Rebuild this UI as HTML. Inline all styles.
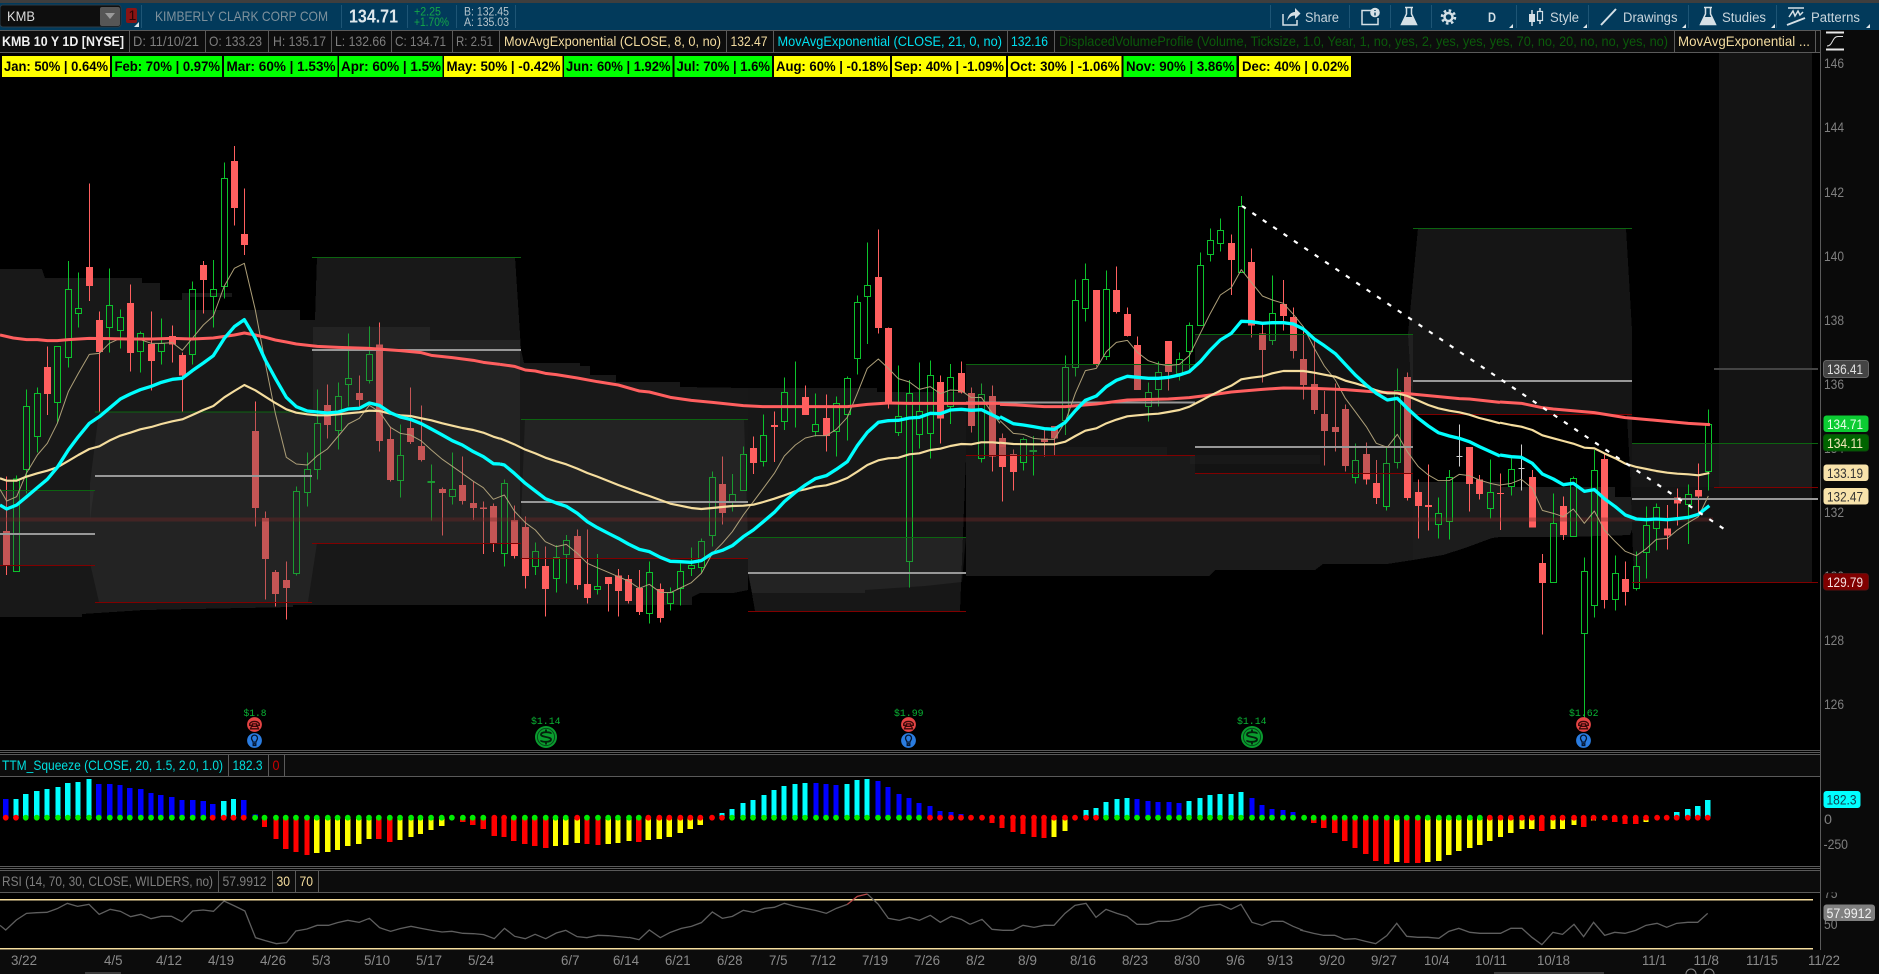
<!DOCTYPE html>
<html><head><meta charset="utf-8"><title>KMB chart</title>
<style>html,body{margin:0;padding:0;background:#000}svg{display:block}
text{font-family:"Liberation Sans",sans-serif;white-space:pre}
.s{stroke:#5a5a5a;stroke-width:1;fill:none}.h{stroke:#1e5575;stroke-width:1}
.ic{fill:none;stroke:#d5e0e6;stroke-width:1.5}.if{fill:#d5e0e6}
.hd{font-size:13.5px;fill:#c9d5dc}.r2{font-size:14px;fill:#7e7e7e}.mo{font-size:14px;font-weight:bold;fill:#000}
.ax{font-size:14px;fill:#7f7f7f}.dt{font-size:14px;fill:#8a8a8a}.pl{font-size:14px}
.eps{font-family:"Liberation Mono",monospace;font-size:10.5px;fill:#0ab234}
</style></head><body>
<svg xmlns="http://www.w3.org/2000/svg" width="1879" height="974" viewBox="0 0 1879 974">
<rect width="1879" height="974" fill="#000"/>
<!-- dark profiles -->
<g shape-rendering="crispEdges">
<polygon fill="#181818" points="0,269 42,269 45,278 142,278 142,283 160,283 160,300 182,300 182,293 232,293 232,297 190,297 190,310 300,310 300,320 315,320 317,257 515,257 521,350 524,363 580,363 580,366 590,366 590,375 616,375 616,382 680,382 680,387 748,388 748,590 733,593 700,593 692,597 692,605 293,605 293,607 144,610 82,614 82,617 0,617"/>
<polygon fill="#171717" points="748,388 877,388 877,392 966,392 966,456 960,611 755,611 748,570"/>
<polygon fill="#1a1a1a" points="966,456 1195,456 1195,474 1413,474 1413,560 1387,564 1323,564 1315,570 1215,570 1209,576 966,576"/>
<polygon fill="#151515" points="1418,228 1626,228 1632,330 1632,414 1413,414 1408,334"/>
<polygon fill="#1c1c1c" points="1413,482 1500,482 1500,487 1615,487 1615,497 1640,497 1640,507 1630,535 1570,537 1500,537 1492,538 1465,548 1443,555 1413,560"/>
<polygon fill="#141414" points="1627,415 1632,415 1632,443 1719,443 1719,582 1634,582 1630,470"/>
<rect x="1719" y="53" width="93" height="529" fill="#141414"/>
<rect x="1632" y="443" width="87" height="44" fill="#171717"/>
<rect x="1719" y="443" width="93" height="44" fill="#1c1c1c"/>
</g>
<!-- candles -->
<g transform="translate(0 130) scale(.33333)" fill="none" shape-rendering="crispEdges">
<path stroke="#ff5f5f" stroke-width="3" d="M19 1040V1335M142 650V855M268 160V513M298 545V845M391 463V725M454 544V782M517 586V698M547 668V845M610 393V551M703 48V287M733 175V375M766 814V1190M796 1144V1409M826 1320V1430M859 1294V1468M982 763V926M1078 736V830M1138 577V965M1171 890V1055M1231 772V942M1264 826V995M1327 1072V1217M1387 979V1124M1420 1054V1170M1450 1114V1272M1480 1120V1266"/>
<path stroke="#ff5f5f" stroke-width="21" d="M19 1203V1305M142 711V792M268 411V468M298 570V666M391 519V669M454 642V693M517 618V644M547 675V736M610 405V450M703 93V234M733 312V345M766 903V1134M796 1164V1287M826 1326V1392M859 1350V1374M982 825V885M1078 789V810M1138 643V933M1171 927V1050M1231 894V936M1264 948V990M1327 1077V1089M1387 1065V1113M1420 1119V1134M1450 1132V1137M1480 1128V1240"/>
<path stroke="#0cc22c" stroke-width="3" d="M49 1037V1047M40 1047h18V1325h-18zM79 778V829M79 1018V1090M70 829h18V1018h-18zM112 772V790M112 920V968M103 790h18V920h-18zM172 818V880M163 649h18V818h-18zM205 393V478M205 683V713M196 478h18V683h-18zM235 427V535M235 551V593M226 535h18V551h-18zM328 415V526M328 593V668M319 526h18V593h-18zM361 538V562M361 602V656M352 562h18V602h-18zM421 604V610M421 665V728M412 610h18V665h-18zM484 565V641M484 665V704M475 641h18V665h-18zM577 455V478M577 674V704M568 478h18V674h-18zM640 390V478M640 500V593M631 478h18V500h-18zM673 97V145M673 470V506M664 145h18V470h-18zM889 1069V1084M889 1331V1336M880 1084h18V1331h-18zM922 968V1018M922 1088V1130M913 1018h18V1088h-18zM952 778V880M952 1019V1048M943 880h18V1019h-18zM1015 757V799M1015 902V958M1006 799h18V902h-18zM1045 610V745M1045 764V830M1036 745h18V764h-18zM1108 589V673M1108 752V760M1099 673h18V752h-18zM1201 883V976M1201 1052V1102M1192 976h18V1052h-18zM1294 1004V1172M1284 1054h20V1058h-20zM1357 967V1078M1357 1100V1124M1348 1078h18V1100h-18z"/>
</g>
<g transform="translate(500 200) scale(.33333)" fill="none" shape-rendering="crispEdges">
<path stroke="#ff5f5f" stroke-width="3" d="M43 916V1075M76 950V1165M136 1040V1250M232 988V1168M262 988V1210M325 1131V1235M355 1107V1250M385 1125V1210M418 1110V1245M481 1150V1268M667 769V974M760 709V822M823 634V786M916 556V645M979 583V755M1135 88V400M1165 382V625M1321 527V730M1384 484V580M1414 562V698M1477 556V815"/>
<path stroke="#ff5f5f" stroke-width="21" d="M43 960V1068M76 981V1128M136 1098V1167M232 1008V1155M262 1152V1194M325 1131V1152M355 1127V1173M385 1137V1203M418 1164V1236M481 1167V1254M667 852V939M760 744V789M823 675V681M916 591V645M979 654V708M1135 231V384M1165 384V610M1321 546V656M1384 519V578M1414 579V678M1477 588V770"/>
<path stroke="#0cc22c" stroke-width="3" d="M13 838V850M13 1060V1100M4 850h18V1060h-18zM106 1027V1054M106 1100V1125M97 1054h18V1100h-18zM169 1035V1072M169 1136V1178M160 1072h18V1136h-18zM199 1005V1021M199 1064V1150M190 1021h18V1064h-18zM292 1062V1159M292 1168V1184M283 1159h18V1168h-18zM448 1084V1117M448 1241V1270M439 1117h18V1241h-18zM511 1162V1177M511 1211V1232M502 1177h18V1211h-18zM541 1090V1114M541 1166V1217M532 1114h18V1166h-18zM574 1042V1096M574 1105V1128M565 1096h18V1105h-18zM604 1015V1024M604 1103V1120M595 1024h18V1103h-18zM637 814V832M637 1007V1040M628 832h18V1007h-18zM697 822V883M697 907V934M688 883h18V907h-18zM730 739V763M721 763h18V872h-18zM790 643V706M790 785V800M781 706h18V785h-18zM853 532V577M853 665V690M844 577h18V665h-18zM886 484V683M946 580V673M946 695V710M937 673h18V695h-18zM1009 590V610M1009 695V770M1000 610h18V695h-18zM1042 530V535M1042 644V722M1033 535h18V644h-18zM1072 287V307M1072 476V523M1063 307h18V476h-18zM1102 127V256M1102 290V432M1093 256h18V290h-18zM1195 496V649M1195 698V708M1186 649h18V698h-18zM1228 540V580M1228 1085V1162M1219 580h18V1085h-18zM1258 488V634M1258 704V745M1249 634h18V704h-18zM1291 481V526M1291 701V776M1282 526h18V701h-18zM1351 492V532M1351 620V672M1342 532h18V620h-18zM1444 550V583M1444 776V788M1435 583h18V776h-18z"/>
</g>
<g transform="translate(1000 180) scale(.33333)" fill="none" shape-rendering="crispEdges">
<path stroke="#ff5f5f" stroke-width="3" d="M7 760V965M40 808V932M133 745V830M163 740V826M289 330V560M349 259V400M382 382V470M412 469V630M505 483V632M694 163V345M754 205V473M787 435V608M850 300V452M880 382V536M910 440V658M943 480V702M973 633V857M1006 610V815M1036 673V875M1099 787V914M1129 840V972M1222 577V962M1255 898V1076M1285 853V1052M1408 801V995M1438 885V958"/>
<path stroke="#ff5f5f" stroke-width="21" d="M7 774V861M40 822V876M133 776V786M163 738V776M289 330V553M349 330V396M382 402V468M412 495V630M505 483V576M694 189V240M754 246V437M787 460V510M850 372V408M880 411V513M910 537V615M943 612V690M973 702V753M1006 741V756M1036 687V858M1099 822V899M1129 909V954M1222 591V954M1255 936V978M1285 975V981M1408 801V912M1438 898V942"/>
<path stroke="#0cc22c" stroke-width="3" d="M70 772V778M70 848V872M61 778h18V848h-18zM100 768V887M90 811h20V815h-20zM196 526V562M196 722V765M187 562h18V722h-18zM226 298V361M226 563V590M217 361h18V563h-18zM256 250V298M256 386V425M247 298h18V386h-18zM319 271V328M319 530V540M310 328h18V530h-18zM445 608V637M445 680V725M436 637h18V680h-18zM475 545V577M475 629V680M466 577h18V629h-18zM538 517V538M538 580V602M529 538h18V580h-18zM568 428V436M568 515V570M559 436h18V515h-18zM601 218V256M592 256h18V437h-18zM631 145V181M631 224V245M622 181h18V224h-18zM661 115V151M661 191V215M652 151h18V191h-18zM724 48V79M715 79h18V277h-18zM817 286V400M817 482V495M808 400h18V482h-18zM1066 790V841M1066 893V910M1057 841h18V893h-18zM1159 800V850M1159 979V992M1150 850h18V979h-18zM1192 565V631M1192 848V865M1183 631h18V848h-18zM1315 952V1000M1315 1034V1076M1306 1000h18V1034h-18zM1348 870V892M1348 1025V1079M1339 892h18V1025h-18zM1471 838V937M1471 986V1016M1462 937h18V986h-18z"/>
<path stroke="#cfcfcf" stroke-width="3" d="M1378 733V860M1369 829h18"/>
</g>
<g transform="translate(1500 340) scale(.33333)" fill="none" shape-rendering="crispEdges">
<path stroke="#ff5f5f" stroke-width="3" d="M1 400V570M97 390V562M127 642V884M190 470V600M313 340V805M376 664V797M502 495V628M532 445V556M595 370V520"/>
<path stroke="#ff5f5f" stroke-width="21" d="M1 459V462M97 411V562M127 669V729M190 498V585M313 357V780M376 717V756M502 565V587M532 473V491M595 450V470"/>
<path stroke="#0cc22c" stroke-width="3" d="M34 355V388M34 440V467M25 388h18V440h-18zM160 460V550M151 550h18V728h-18zM220 410V415M211 415h18V590h-18zM253 652V694M253 880V1149M244 694h18V880h-18zM283 330V391M283 796V832M274 391h18V796h-18zM346 646V700M346 778V812M337 700h18V778h-18zM409 635V679M409 746V752M400 679h18V746h-18zM439 500V556M439 637V716M430 556h18V637h-18zM469 490V502M469 566V632M460 502h18V566h-18zM565 433V463M565 494V612M556 463h18V494h-18zM625 208V253M625 395V452M616 253h18V395h-18z"/>
<path stroke="#cfcfcf" stroke-width="3" d="M64 313V452M55 385h18"/>
</g>
<!-- value area overlays -->
<g fill="#3e3e3e" fill-opacity=".3">
<polygon points="0,490 94,490 90,520 90,565 0,565"/>
<polygon points="99,412 313,412 313,327 430,327 430,340 520,340 520,543 317,543 308,602 99,602 90,563 90,483"/>
<polygon points="525,419 744,419 748,540 748,558.7 520,558.7 520,545"/>
<polygon points="748,537 966,537 962,582 925,586 865,590 865,593 752,593 748,575"/>
<polygon points="966,364 1195,364 1195,456 966,456"/>
<polygon points="1195,334 1413,334 1413,474 1195,474"/>
<rect fill-opacity=".14" x="1000" y="447" width="167" height="9"/>
<rect fill-opacity=".12" x="1190" y="455" width="130" height="9"/>
</g>
<!-- horizontal lines -->
<rect x="0" y="517.5" width="1713" height="4" fill="#7a2828" fill-opacity=".38"/>
<g shape-rendering="crispEdges">
<path fill="none" stroke="#0c6410" stroke-width="1" d="M0 490.5H95M95 412H312M312 257.500H521M521 419.500H748M748 537.500H966M966 364.500H1195M1195 334.500H1413M1413 228.500H1632M1632 443.500H1818"/>
<path fill="none" stroke="#800000" stroke-width="1" d="M0 565.500H95M95 602.500H312M312 543.500H521M521 558.500H748M748 611.500H966M966 455.500H1195M1195 473.500H1413M1413 414.500H1632M1632 582.500H1818M1714 487.500H1818"/>
<path fill="none" stroke="#989898" stroke-width="2" d="M0 534H95M95 476H312M312 350H521M521 502H748M748 573H966M966 402.500H1195M1195 447H1413M1413 381H1632M1632 499H1818"/>
<path fill="none" stroke="#444" stroke-width="2" d="M1714 369H1818"/>
</g>
<!-- moving averages -->
<g fill="none" stroke-linejoin="round">
<g transform="translate(0 130) scale(.33333)">
<path stroke="#ad9f78" stroke-width="3" d="M0 1078L20 1113L50 1100L79 1030L112 975L142 940L172 880L205 785L235 730L268 673L298 670L328 640L361 625L391 628L421 629L454 640L484 640L517 638L547 661L577 625L610 585L640 558L673 468L703 415L733 400L766 540L796 700L826 850L859 982L889 1002L922 1005L952 977L982 957L1015 918L1045 882L1078 865L1108 826L1138 845L1171 892L1201 910L1231 915L1264 933L1294 960L1327 988L1357 1009L1387 1030L1420 1054L1450 1073L1480 1108L1500 1100"/>
<path stroke="#ff5f5f" stroke-width="9" d="M0 615L40 624L80 629L112 629L142 632L172 632L205 629L268 625L328 626L391 627L454 627L517 625L577 627L640 624L703 615L733 609L766 615L796 622L826 630L859 636L889 642L952 649L1015 652L1108 655L1201 662L1264 668L1294 676L1357 683L1420 691L1450 697L1500 703"/>
<path stroke="#f5dd9e" stroke-width="6.500" d="M0 1045L20 1052L50 1052L79 1040L112 1030L142 1022L172 1012L205 993L235 975L268 957L298 949L328 932L361 917L391 908L421 898L454 891L484 882L517 874L547 868L577 855L610 840L640 828L673 802L703 783L733 765L766 781L796 800L826 819L859 838L889 848L922 853L952 856L982 856L1015 853L1045 850L1078 847L1108 842L1138 843L1171 851L1201 856L1231 858L1264 865L1294 871L1327 880L1357 887L1387 894L1420 900L1450 908L1480 920L1500 926"/>
<path stroke="#00ffff" stroke-width="10" d="M0 1125L20 1137L50 1125L80 1100L112 1073L142 1048L172 1012L205 960L235 920L268 880L298 860L328 835L361 807L391 792L421 779L454 769L484 757L517 748L547 745L577 722L610 699L640 677L673 625L703 590L733 569L766 625L796 690L826 745L859 802L889 830L922 843L952 846L982 849L1015 846L1045 837L1078 835L1108 819L1138 826L1171 848L1201 861L1231 868L1264 881L1294 897L1327 915L1357 932L1387 945L1420 965L1450 980L1480 1001L1500 1002"/>
</g>
<g transform="translate(500 200) scale(.33333)">
<path stroke="#ad9f78" stroke-width="3" d="M0 890L13 885L43 933L76 968L106 990L136 1025L169 1040L199 1033L232 1060L262 1090L292 1103L325 1117L355 1130L385 1143L418 1165L448 1153L481 1177L511 1178L541 1164L574 1148L604 1120L637 1060L667 1030L697 995L730 945L760 905L790 865L823 820L853 768L886 735L916 714L946 707L979 707L1009 688L1042 652L1072 580L1102 505L1135 477L1165 505L1195 536L1228 546L1258 568L1291 560L1321 581L1351 570L1384 572L1414 593L1444 592L1477 640L1500 670"/>
<path stroke="#ff5f5f" stroke-width="9" d="M0 493L43 499L76 510L106 513L136 520L169 524L232 534L292 545L355 555L418 573L448 576L511 592L574 601L637 607L730 617L790 620L853 620L916 620L1042 620L1102 613L1165 609L1228 610L1321 610L1500 610"/>
<path stroke="#f5dd9e" stroke-width="6.500" d="M0 715L43 733L76 749L106 760L136 773L169 784L199 793L232 806L262 819L292 830L325 843L355 855L385 866L418 878L448 888L481 900L511 911L541 917L574 924L604 927L637 924L667 921L697 918L730 917L760 914L790 906L823 896L853 886L886 874L916 868L946 860L979 856L1009 847L1042 834L1072 815L1102 795L1135 781L1165 775L1195 773L1228 763L1258 760L1291 750L1321 746L1351 738L1384 732L1414 733L1444 727L1477 727L1500 729"/>
<path stroke="#00ffff" stroke-width="10" d="M0 792L13 795L43 820L76 850L106 873L136 896L169 909L199 919L232 940L262 965L292 983L325 1000L355 1015L385 1032L418 1048L448 1055L481 1072L511 1084L541 1085L574 1087L604 1082L637 1060L667 1051L697 1037L730 1010L760 990L790 965L823 937L853 905L886 877L916 855L946 836L979 827L1009 808L1042 785L1072 737L1102 697L1135 667L1165 662L1195 661L1228 654L1258 652L1291 640L1321 641L1351 630L1384 628L1414 631L1444 629L1477 645L1500 656"/>
</g>
<g transform="translate(1000 180) scale(.33333)">
<path stroke="#ad9f78" stroke-width="3" d="M0 722L40 760L70 763L100 775L133 778L163 778L196 725L226 640L256 572L289 565L319 515L349 487L382 481L412 517L445 542L475 552L505 557L538 553L568 527L601 460L631 400L661 345L694 323L724 269L754 307L787 348L817 360L850 370L880 403L910 440L943 505L973 558L1006 600L1036 655L1066 695L1099 740L1129 790L1162 802L1192 763L1222 815L1255 860L1285 885L1315 902L1348 902L1378 883L1408 887L1438 900L1471 910L1500 916"/>
<path stroke="#ff5f5f" stroke-width="9" d="M0 673L70 676L133 680L196 680L289 672L382 660L505 657L568 653L631 645L694 636L787 628L850 624L943 625L1036 629L1129 636L1222 641L1285 647L1378 656L1408 657L1500 667"/>
<path stroke="#f5dd9e" stroke-width="6.500" d="M0 788L40 792L100 793L163 793L196 785L226 768L256 752L289 745L319 730L349 719L382 709L412 706L445 703L475 701L505 696L538 690L568 680L601 663L631 647L661 632L694 617L724 598L754 593L787 589L817 580L850 573L880 573L910 573L943 578L973 584L1006 590L1036 602L1066 610L1099 620L1129 631L1162 640L1192 640L1222 648L1255 662L1285 675L1315 685L1348 692L1378 697L1408 704L1438 714L1471 722L1500 730"/>
<path stroke="#00ffff" stroke-width="10" d="M0 710L40 731L70 735L100 740L133 746L163 748L196 727L226 692L256 661L289 648L319 620L349 601L382 589L412 592L445 595L475 595L505 592L538 585L568 575L601 545L631 510L661 480L694 460L724 424L754 425L787 430L817 428L850 428L880 432L910 447L943 477L973 497L1006 521L1036 553L1066 585L1099 615L1129 640L1162 660L1192 655L1222 685L1255 715L1285 738L1315 758L1348 768L1378 775L1408 785L1438 800L1471 815L1500 828"/>
</g>
<g transform="translate(1500 340) scale(.33333)">
<path stroke="#ad9f78" stroke-width="3" d="M0 435L34 430L64 418L97 445L127 511L160 520L190 530L220 507L253 550L283 513L313 570L346 605L376 634L409 647L439 626L469 598L502 595L532 570L565 548L595 530L625 468"/>
<path stroke="#ff5f5f" stroke-width="9" d="M0 186L64 190L127 203L160 207L283 218L376 233L469 241L565 250L630 254"/>
<path stroke="#f5dd9e" stroke-width="6.500" d="M0 248L34 255L64 260L97 270L127 286L160 295L190 303L220 311L253 323L283 325L313 340L346 355L376 371L409 381L439 387L469 393L502 398L532 401L565 403L595 406L628 399"/>
<path stroke="#00ffff" stroke-width="10" d="M0 345L34 350L64 352L97 370L127 402L160 417L190 434L220 430L253 454L283 449L313 476L346 500L376 525L409 537L439 539L469 537L502 539L532 536L565 532L595 523L628 497"/>
</g>
</g>
<path d="M1242 206L1730 533" stroke="#fff" stroke-width="2.200" stroke-dasharray="4.500 8" fill="none"/>
<!-- earnings -->
<g>
<text class="eps" x="243.500" y="716" textLength="23" lengthAdjust="spacingAndGlyphs">$1.8</text>
<text class="eps" x="531" y="724" textLength="29.500" lengthAdjust="spacingAndGlyphs">$1.14</text>
<text class="eps" x="894" y="716" textLength="29.500" lengthAdjust="spacingAndGlyphs">$1.99</text>
<text class="eps" x="1237" y="724" textLength="29.500" lengthAdjust="spacingAndGlyphs">$1.14</text>
<text class="eps" x="1569" y="716" textLength="29.500" lengthAdjust="spacingAndGlyphs">$1.62</text>
<defs>
<g id="ph"><circle r="7.400" fill="#e54444"/><path fill="none" stroke="#3a0808" stroke-width="1.300" d="M-4.800-.8C-3-3.800 3-3.800 4.800-.8V.8H2V-.6H-2V.8H-4.800zM-3 1.800H3L4 4.300H-4z"/></g>
<g id="bl"><circle r="7.400" fill="#2a7ce0"/><path fill="none" stroke="#04142e" stroke-width="1.300" d="M-1.500 1.600C-1.500 0-3-.4-3-2.400A3 3 0 0 1 3-2.400C3-.4 1.500 0 1.500 1.600zM-1.300 3.300H1.300V5H-1.300z"/></g>
<g id="dl"><circle r="11" fill="#0a9c2e"/><circle r="8.600" fill="none" stroke="#05481a" stroke-width="1"/><path fill="none" stroke="#03220c" stroke-width="1.900" d="M5-3.200C5-5.500-5-5.500-5-2.500C-5 .5 5-.5 5 2.500C5 5.500-5 5.500-5 3.200M0-7.500V-5M0 5V7.500"/></g>
</defs>
<use href="#ph" x="254.500" y="724.500"/><use href="#bl" x="254.500" y="740.500"/>
<use href="#dl" x="546" y="737"/>
<use href="#ph" x="908.500" y="724.500"/><use href="#bl" x="908.500" y="740.500"/>
<use href="#dl" x="1252" y="737"/>
<use href="#ph" x="1583.500" y="724.500"/><use href="#bl" x="1583.500" y="740.500"/>
</g>
<!-- panes background & rows -->
<g shape-rendering="crispEdges">
<rect x="1821" y="30" width="58" height="944" fill="#0a0a0a"/>
<rect x="0" y="751" width="1821" height="4" fill="#000"/>
<rect x="0" y="755" width="1820" height="22" fill="#0c0c0c"/>
<rect x="0" y="871" width="1820" height="21" fill="#0c0c0c"/>
<rect x="0" y="950" width="1821" height="24" fill="#0c0c0c"/>
<path class="s" d="M0 750.500H1820M0 752.500H1820M0 754.500H1820M0 776.500H1820M0 866.500H1820M0 868.500H1820M0 870.500H1820M0 892.500H1820M1820.500 30V950M228.500 755V776M268.500 755V776M284.500 755V776M218.500 871V892M272.500 871V892M295.500 871V892M318.500 871V892"/>
</g>
<!-- squeeze -->
<g transform="translate(0 700) scale(.40816 .33333)" fill="none" stroke-width="13" shape-rendering="crispEdges">
<path stroke="#0000ff" d="M14 353V297M242 353V252M269 353V252M294 353V255M318 353V264M345 353V267M370 353V279M394 353V285M421 353V291M446 353V300M472 353V300M498 353V303M521 353V312M597 353V300M625 353V343"/>
<path stroke="#00ffff" d="M39 353V297M63 353V282M90 353V273M115 353V267M142 353V261M166 353V249M191 353V246M218 353V237M548 353V303M572 353V297"/>
<path stroke="#ff0000" d="M648 353V381M676 353V417M700 353V447M725 353V456M752 353V465M928 353V417M955 353V426M1134 353V366M1158 353V375M1184 353V387M1211 353V408M1235 353V411M1259 353V423M1286 353V432M1310 353V438M1337 353V444M1438 353V432M1465 353V435M1565 353V426"/>
<path stroke="#ffff00" d="M776 353V459M803 353V456M827 353V450M852 353V438M879 353V432M904 353V417M980 353V420M1007 353V411M1030 353V402M1056 353V390M1082 353V378M1361 353V438M1386 353V435M1414 353V429M1490 353V432M1514 353V429M1541 353V423"/>
</g>
<g transform="translate(630 700) scale(.33333)" fill="none" stroke-width="16" shape-rendering="crispEdges">
<path stroke="#ffff00" d="M55 353V420M88 353V417M118 353V411M151 353V399M181 353V387M211 353V375"/>
<path stroke="#00ffff" d="M276 353V339M306 353V327M339 353V309M369 353V300M402 353V285M432 353V270M462 353V258M495 353V252M525 353V249M651 353V252M681 353V240M711 353V237"/>
<path stroke="#0000ff" d="M558 353V249M588 353V252M618 353V255M744 353V243M774 353V261M807 353V282M837 353V294M867 353V309M900 353V318M930 353V333M963 353V336M993 353V342"/>
</g>
<g transform="translate(970 700) scale(.33333)" fill="none" stroke-width="16" shape-rendering="crispEdges">
<path stroke="#ff0000" d="M66 353V369M96 353V384M129 353V396M159 353V402M192 353V411M222 353V414"/>
<path stroke="#ffff00" d="M252 353V411M285 353V393"/>
<path stroke="#00ffff" d="M348 353V330M378 353V324M408 353V306M441 353V297M471 353V294M657 353V303M690 353V294M720 353V285M750 353V282M783 353V282M813 353V276"/>
<path stroke="#0000ff" d="M501 353V297M534 353V303M564 353V306M597 353V306M627 353V309M846 353V294M876 353V315M906 353V327M939 353V330M969 353V336"/>
</g>
<g transform="translate(1300 700) scale(.36928 .33333)" fill="none" stroke-width="14.400" shape-rendering="crispEdges">
<path stroke="#ff0000" d="M37 353V369M64 353V384M94 353V399M121 353V423M149 353V444M178 353V462M205 353V483M235 353V492M289 353V489M319 353V489M655 353V393M768 353V381M825 353V360M852 353V366M880 353V372M909 353V372"/>
<path stroke="#ffff00" d="M262 353V486M346 353V486M376 353V483M403 353V465M430 353V453M460 353V444M487 353V435M514 353V423M543 353V411M571 353V399M601 353V387M628 353V387M685 353V387M711 353V387M742 353V375M795 353V362M937 353V366"/>
<path stroke="#00ffff" d="M1020 353V336M1050 353V327M1077 353V318M1104 353V300"/>
</g>
<!-- dots -->
<g fill="none" stroke-width="5.800" stroke-linecap="round">
<g transform="translate(0 700) scale(.40816 .33333)">
<path vector-effect="non-scaling-stroke" stroke="#ff0000" d="M14 353h.1M39 353h.1M521 353h.1M548 353h.1M572 353h.1M597 353h.1M1211 353h.1M1235 353h.1M1414 353h.1"/>
<path vector-effect="non-scaling-stroke" stroke="#00ee00" d="M63 353h.1M90 353h.1M115 353h.1M142 353h.1M166 353h.1M191 353h.1M218 353h.1M242 353h.1M269 353h.1M294 353h.1M318 353h.1M345 353h.1M370 353h.1M394 353h.1M421 353h.1M446 353h.1M472 353h.1M498 353h.1M625 353h.1M648 353h.1M676 353h.1M700 353h.1M725 353h.1M752 353h.1M776 353h.1M803 353h.1M827 353h.1M852 353h.1M879 353h.1M904 353h.1M928 353h.1M955 353h.1M980 353h.1M1007 353h.1M1030 353h.1M1056 353h.1M1082 353h.1M1107 353h.1M1134 353h.1M1158 353h.1M1184 353h.1M1259 353h.1M1286 353h.1M1310 353h.1M1337 353h.1M1361 353h.1M1386 353h.1M1438 353h.1M1465 353h.1M1490 353h.1M1514 353h.1M1541 353h.1M1565 353h.1"/>
</g>
<g transform="translate(630 700) scale(.33333)">
<path vector-effect="non-scaling-stroke" stroke="#ff0000" d="M55 353h.1M88 353h.1M118 353h.1M151 353h.1M181 353h.1M211 353h.1M246 353h.1M276 353h.1M900 353h.1M930 353h.1M963 353h.1M993 353h.1"/>
<path vector-effect="non-scaling-stroke" stroke="#00ee00" d="M306 353h.1M339 353h.1M369 353h.1M402 353h.1M432 353h.1M462 353h.1M495 353h.1M525 353h.1M558 353h.1M588 353h.1M618 353h.1M651 353h.1M681 353h.1M711 353h.1M744 353h.1M774 353h.1M807 353h.1M837 353h.1M867 353h.1"/>
</g>
<g transform="translate(970 700) scale(.33333)">
<path vector-effect="non-scaling-stroke" stroke="#ff0000" d="M3 353h.1M36 353h.1M66 353h.1M96 353h.1M129 353h.1M159 353h.1M192 353h.1M222 353h.1M252 353h.1M285 353h.1M315 353h.1M348 353h.1M378 353h.1"/>
<path vector-effect="non-scaling-stroke" stroke="#00ee00" d="M408 353h.1M441 353h.1M471 353h.1M501 353h.1M534 353h.1M564 353h.1M597 353h.1M627 353h.1M657 353h.1M690 353h.1M720 353h.1M750 353h.1M783 353h.1M813 353h.1M846 353h.1M876 353h.1M906 353h.1M939 353h.1M969 353h.1"/>
</g>
<g transform="translate(1300 700) scale(.36928 .33333)">
<path vector-effect="non-scaling-stroke" stroke="#00ee00" d="M11 353h.1M37 353h.1M64 353h.1M94 353h.1M121 353h.1M149 353h.1M178 353h.1M205 353h.1M235 353h.1M262 353h.1M289 353h.1M319 353h.1M346 353h.1M376 353h.1M403 353h.1M430 353h.1M460 353h.1M487 353h.1"/>
<path vector-effect="non-scaling-stroke" stroke="#ff0000" d="M514 353h.1M543 353h.1M571 353h.1M601 353h.1M628 353h.1M655 353h.1M685 353h.1M711 353h.1M742 353h.1M768 353h.1M795 353h.1M825 353h.1M852 353h.1M880 353h.1M909 353h.1M937 353h.1M967 353h.1M993 353h.1M1020 353h.1M1050 353h.1M1077 353h.1M1104 353h.1"/>
</g>
</g>
<!-- RSI -->
<path d="M0 899.500H1813M0 948.500H1813" stroke="#f5dd9e" stroke-width="1.500" fill="none" shape-rendering="crispEdges"/>
<g fill="none" stroke="#5f5f5f" stroke-width="1.300">
<g transform="translate(0 700) scale(.40816 .33333)"><path vector-effect="non-scaling-stroke" d="M0 676L14 690L40 660L65 640L90 638L115 637L140 626L165 610L190 619L218 613L243 643L270 628L295 634L320 650L345 643L370 656L395 649L420 649L446 665L472 633L498 630L523 634L549 603L575 618L600 633L626 713L650 722L677 731L702 728L725 693L752 687L777 676L805 676L827 668L852 661L880 667L905 655L930 683L957 694L980 686L1007 679L1032 685L1058 691L1083 696L1107 694L1134 700L1160 701L1185 704L1211 716L1236 685L1261 709L1287 716L1311 703L1337 716L1363 699L1386 691L1414 710L1438 713L1465 706L1490 707L1515 710L1541 713"/></g>
<g transform="translate(630 700) scale(.33333)"><path vector-effect="non-scaling-stroke" d="M-3 712L27 719L58 690L91 713L121 697L154 685L184 679L214 668L247 636L277 655L307 649L340 631L370 637L403 625L433 622L463 610L496 619L526 625L559 632L589 640L619 625L652 613M712 582L745 613L775 655L808 661L838 652L868 661L901 646L931 667L964 649L994 658L1020 673"/><path vector-effect="non-scaling-stroke" stroke="#b84a4a" d="M652 613L682 589L712 582"/></g>
<g transform="translate(970 700) scale(.33333)"><path vector-effect="non-scaling-stroke" d="M0 673L36 658L66 688L99 691L129 691L159 676L192 682L222 676L252 676L285 640L315 616L348 610L378 652L408 628L441 640L471 649L501 673L534 673L564 664L597 664L627 658L657 646L690 622L720 616L750 613L783 628L813 613L846 667L876 676L906 664L939 664L969 679L999 691"/></g>
<g transform="translate(1300 700) scale(.36928 .33333)"><path vector-effect="non-scaling-stroke" d="M0 690L37 700L64 706L94 706L121 718L149 716L178 724L205 731L235 707L262 670L289 709L319 712L346 712L376 715L403 694L430 685L460 697L487 700L514 700L543 700L571 685L601 685L628 712L655 734L685 697L711 703L742 673L768 710L795 667L825 706L852 697L880 700L909 691L937 676L967 670L993 682L1020 670L1050 667L1077 667L1104 640"/></g>
</g>
<!-- pane row text -->
<text class="pl" x="2" y="770" fill="#00dede" textLength="221" lengthAdjust="spacingAndGlyphs">TTM_Squeeze (CLOSE, 20, 1.5, 2.0, 1.0)</text>
<text class="pl" x="232.500" y="770" fill="#00dede" textLength="30" lengthAdjust="spacingAndGlyphs">182.3</text>
<text class="pl" x="272.500" y="770" fill="#cc0000" textLength="7" lengthAdjust="spacingAndGlyphs">0</text>
<text class="pl" x="2" y="886" fill="#7e7e7e" textLength="211" lengthAdjust="spacingAndGlyphs">RSI (14, 70, 30, CLOSE, WILDERS, no)</text>
<text class="pl" x="222.500" y="886" fill="#7e7e7e" textLength="44" lengthAdjust="spacingAndGlyphs">57.9912</text>
<text class="pl" x="276.500" y="886" fill="#f5dd9e" textLength="13.500" lengthAdjust="spacingAndGlyphs">30</text>
<text class="pl" x="299.500" y="886" fill="#f5dd9e" textLength="13.500" lengthAdjust="spacingAndGlyphs">70</text>
<!-- dates -->
<g transform="translate(0 -1)">
<text class="dt" x="11" y="966" textLength="26" lengthAdjust="spacingAndGlyphs">3/22</text>
<text class="dt" x="104" y="966" textLength="18.500" lengthAdjust="spacingAndGlyphs">4/5</text>
<text class="dt" x="156" y="966" textLength="26" lengthAdjust="spacingAndGlyphs">4/12</text>
<text class="dt" x="208" y="966" textLength="26" lengthAdjust="spacingAndGlyphs">4/19</text>
<text class="dt" x="260" y="966" textLength="26" lengthAdjust="spacingAndGlyphs">4/26</text>
<text class="dt" x="312" y="966" textLength="18.500" lengthAdjust="spacingAndGlyphs">5/3</text>
<text class="dt" x="364" y="966" textLength="26" lengthAdjust="spacingAndGlyphs">5/10</text>
<text class="dt" x="416" y="966" textLength="26" lengthAdjust="spacingAndGlyphs">5/17</text>
<text class="dt" x="468" y="966" textLength="26" lengthAdjust="spacingAndGlyphs">5/24</text>
<text class="dt" x="561" y="966" textLength="18.500" lengthAdjust="spacingAndGlyphs">6/7</text>
<text class="dt" x="613" y="966" textLength="26" lengthAdjust="spacingAndGlyphs">6/14</text>
<text class="dt" x="665" y="966" textLength="25.500" lengthAdjust="spacingAndGlyphs">6/21</text>
<text class="dt" x="717" y="966" textLength="25.500" lengthAdjust="spacingAndGlyphs">6/28</text>
<text class="dt" x="769" y="966" textLength="18.500" lengthAdjust="spacingAndGlyphs">7/5</text>
<text class="dt" x="810" y="966" textLength="26" lengthAdjust="spacingAndGlyphs">7/12</text>
<text class="dt" x="862" y="966" textLength="26" lengthAdjust="spacingAndGlyphs">7/19</text>
<text class="dt" x="914" y="966" textLength="26" lengthAdjust="spacingAndGlyphs">7/26</text>
<text class="dt" x="966" y="966" textLength="19" lengthAdjust="spacingAndGlyphs">8/2</text>
<text class="dt" x="1018" y="966" textLength="19" lengthAdjust="spacingAndGlyphs">8/9</text>
<text class="dt" x="1070" y="966" textLength="26" lengthAdjust="spacingAndGlyphs">8/16</text>
<text class="dt" x="1122" y="966" textLength="26" lengthAdjust="spacingAndGlyphs">8/23</text>
<text class="dt" x="1174" y="966" textLength="26" lengthAdjust="spacingAndGlyphs">8/30</text>
<text class="dt" x="1226" y="966" textLength="19" lengthAdjust="spacingAndGlyphs">9/6</text>
<text class="dt" x="1267" y="966" textLength="26" lengthAdjust="spacingAndGlyphs">9/13</text>
<text class="dt" x="1319" y="966" textLength="26" lengthAdjust="spacingAndGlyphs">9/20</text>
<text class="dt" x="1371" y="966" textLength="26" lengthAdjust="spacingAndGlyphs">9/27</text>
<text class="dt" x="1424" y="966" textLength="25.500" lengthAdjust="spacingAndGlyphs">10/4</text>
<text class="dt" x="1475" y="966" textLength="32" lengthAdjust="spacingAndGlyphs">10/11</text>
<text class="dt" x="1537" y="966" textLength="33" lengthAdjust="spacingAndGlyphs">10/18</text>
<text class="dt" x="1642" y="966" textLength="24.500" lengthAdjust="spacingAndGlyphs">11/1</text>
<text class="dt" x="1693.500" y="966" textLength="25.500" lengthAdjust="spacingAndGlyphs">11/8</text>
<text class="dt" x="1746" y="966" textLength="32" lengthAdjust="spacingAndGlyphs">11/15</text>
<text class="dt" x="1808" y="966" textLength="32" lengthAdjust="spacingAndGlyphs">11/22</text>
</g>
<rect x="85" y="972" width="36" height="2" fill="#3a3a3a"/><rect x="1494" y="972" width="110" height="2" fill="#3a3a3a"/>
<path d="M1686 974a5 5 0 0 1 10 0M1704 974a5 5 0 0 1 10 0" stroke="#888" fill="none"/>
<!-- right axis -->
<g>
<text class="ax" x="1824" y="68" textLength="20" lengthAdjust="spacingAndGlyphs">146</text>
<text class="ax" x="1824" y="132" textLength="20" lengthAdjust="spacingAndGlyphs">144</text>
<text class="ax" x="1824" y="197" textLength="20" lengthAdjust="spacingAndGlyphs">142</text>
<text class="ax" x="1824" y="261" textLength="20" lengthAdjust="spacingAndGlyphs">140</text>
<text class="ax" x="1824" y="325" textLength="20" lengthAdjust="spacingAndGlyphs">138</text>
<text class="ax" x="1824" y="389" textLength="20" lengthAdjust="spacingAndGlyphs">136</text>
<text class="ax" x="1824" y="453" textLength="20" lengthAdjust="spacingAndGlyphs">134</text>
<text class="ax" x="1824" y="517" textLength="20" lengthAdjust="spacingAndGlyphs">132</text>
<text class="ax" x="1824" y="581" textLength="20" lengthAdjust="spacingAndGlyphs">130</text>
<text class="ax" x="1824" y="645" textLength="20" lengthAdjust="spacingAndGlyphs">128</text>
<text class="ax" x="1824" y="709" textLength="20" lengthAdjust="spacingAndGlyphs">126</text>
<text class="ax" x="1824" y="824" textLength="8" lengthAdjust="spacingAndGlyphs">0</text>
<text class="ax" x="1823.500" y="849" textLength="24.500" lengthAdjust="spacingAndGlyphs">-250</text>
<text class="ax" x="1824" y="898" textLength="13.500" lengthAdjust="spacingAndGlyphs">75</text>
<text class="ax" x="1824" y="929" textLength="13.500" lengthAdjust="spacingAndGlyphs">50</text>
</g>
<rect x="1821" y="871" width="58" height="21.500" fill="#0a0a0a"/>
<g>
<rect x="1823.500" y="360.500" width="45" height="17" rx="3" fill="#444" stroke="#666"/><text class="pl" x="1827" y="374" fill="#e0e0e0" textLength="36" lengthAdjust="spacingAndGlyphs">136.41</text>
<rect x="1823.500" y="415.500" width="45" height="16.500" rx="3" fill="#0ccc33"/><text class="pl" x="1827" y="429" fill="#e8ffe8" textLength="36" lengthAdjust="spacingAndGlyphs">134.71</text>
<rect x="1823.500" y="434.500" width="45" height="16.500" rx="3" fill="#006400" stroke="#0a4a0a"/><text class="pl" x="1827" y="448" fill="#f5e8b8" textLength="36" lengthAdjust="spacingAndGlyphs">134.11</text>
<rect x="1823.500" y="464.500" width="45" height="16.500" rx="3" fill="#f8e3ab"/><text class="pl" x="1827" y="478" fill="#333" textLength="36" lengthAdjust="spacingAndGlyphs">133.19</text>
<rect x="1823.500" y="488" width="45" height="16.500" rx="3" fill="#f8e3ab"/><text class="pl" x="1827" y="501.500" fill="#333" textLength="36" lengthAdjust="spacingAndGlyphs">132.47</text>
<rect x="1823.500" y="573.500" width="45" height="16.500" rx="3" fill="#800000" stroke="#5a1010"/><text class="pl" x="1827" y="587" fill="#f5e0e0" textLength="36" lengthAdjust="spacingAndGlyphs">129.79</text>
<rect x="1823.500" y="791" width="37" height="17" rx="3" fill="#00ffff"/><text class="pl" x="1826.500" y="804.500" fill="#104050" textLength="30" lengthAdjust="spacingAndGlyphs">182.3</text>
<rect x="1823.500" y="904.500" width="51.500" height="16.500" rx="3" fill="#808080"/><text class="pl" x="1826.500" y="918" fill="#f0f0f0" textLength="45" lengthAdjust="spacingAndGlyphs">57.9912</text>
</g>
<!-- axis icon -->
<path d="M1826 32.500H1844M1826 49.500H1844" stroke="#e8e8e8" stroke-width="2" fill="none"/>
<path d="M1827 46C1833 46 1832 36.500 1838 36.500H1843" stroke="#ddd" stroke-width="1" fill="none"/>
<!-- header -->
<rect width="1879" height="3" fill="#3e3e3e"/>
<rect y="3" width="1879" height="27" fill="#023a5b"/>
<rect x="0" y="5" width="121" height="22" rx="3" fill="#0e0e0e" stroke="#2a3c48"/>
<rect x="100" y="7" width="20" height="19" rx="2" fill="#565656"/>
<polygon points="105,13 115,13 110,19" fill="#9a9a9a"/>
<text class="hd" x="7" y="21" style="fill:#dcdcdc" textLength="28" lengthAdjust="spacingAndGlyphs">KMB</text>
<rect x="126" y="8" width="11" height="15" rx="2" fill="#8a1414"/>
<text x="128.500" y="20" font-size="14" fill="#2a0505">1</text>
<polygon points="139,22 139,27 134,27" fill="#dfe6ea"/>
<path class="h" d="M141.500 5V28M341.500 5V28M407.500 5V28M456.500 5V28M515.500 5V28M1270.500 5V28M1349.500 5V28M1390.500 5V28M1431.500 5V28M1516.500 5V28M1588.500 5V28M1688.500 5V28M1776.500 5V28"/>
<text x="155" y="21" font-size="14" fill="#7e919c" textLength="173" lengthAdjust="spacingAndGlyphs">KIMBERLY CLARK CORP COM</text>
<text x="349" y="22.500" font-size="18" font-weight="bold" fill="#dfe8ec" textLength="49" lengthAdjust="spacingAndGlyphs">134.71</text>
<text x="414" y="15.500" font-size="11.500" fill="#14a848" textLength="27" lengthAdjust="spacingAndGlyphs">+2.25</text>
<text x="414" y="26" font-size="11.500" fill="#14a848" textLength="35" lengthAdjust="spacingAndGlyphs">+1.70%</text>
<text x="464" y="15.500" font-size="11.500" fill="#b9c6cd" textLength="45" lengthAdjust="spacingAndGlyphs">B: 132.45</text>
<text x="464" y="26" font-size="11.500" fill="#b9c6cd" textLength="45" lengthAdjust="spacingAndGlyphs">A: 135.03</text>
<!-- header right -->
<path class="ic" d="M1283 14V25H1297V20"/><path class="if" d="M1287 21C1288 15 1291 12 1295 12V8L1300.500 13.500L1295 19V15.500C1292 15.500 1289 17 1287 21Z"/>
<text class="hd" x="1305" y="22" textLength="34" lengthAdjust="spacingAndGlyphs">Share</text>
<path class="ic" d="M1373 10.500H1362V24.500H1378V18"/><circle class="if" cx="1375" cy="12.500" r="4.800"/><path d="M1375 10V11M1375 12.500V15.500" stroke="#023a5b" stroke-width="1.400"/>
<path class="ic" d="M1405 7.500H1413M1406.500 7.500V14L1401.500 24.500H1416.500L1411.500 14V7.500"/><path class="if" d="M1405 17H1413L1417 25H1401Z"/>
<circle cx="1448.500" cy="17" r="4" fill="none" stroke="#d5e0e6" stroke-width="2.500"/><circle cx="1448.500" cy="17" r="6.500" fill="none" stroke="#d5e0e6" stroke-width="2.500" stroke-dasharray="2.550 2.550"/>
<text x="1488" y="22" font-size="13.500" font-weight="bold" fill="#d5e0e6" textLength="8" lengthAdjust="spacingAndGlyphs">D</text>
<g fill="#dfe6ea"><polygon points="1513,24 1513,28 1509,28"/><polygon points="1587,24 1587,28 1583,28"/><polygon points="1686,24 1686,28 1682,28"/><polygon points="1775,24 1775,28 1771,28"/><polygon points="1870,24 1870,28 1866,28"/></g>
<path class="ic" d="M1532 10V26M1540 8V24"/><rect x="1529" y="14" width="6" height="8" fill="#d5e0e6"/><rect x="1537.500" y="11.500" width="5" height="9" fill="#023a5b" stroke="#d5e0e6" stroke-width="1.200"/>
<text class="hd" x="1550" y="22" textLength="29" lengthAdjust="spacingAndGlyphs">Style</text>
<path d="M1601 25L1616 9" stroke="#d5e0e6" stroke-width="2" fill="none"/>
<text class="hd" x="1623" y="22" textLength="54.500" lengthAdjust="spacingAndGlyphs">Drawings</text>
<path class="ic" d="M1704 7.500H1712M1705.500 7.500V14L1700.500 24.500H1715.500L1710.500 14V7.500"/><path class="if" d="M1704 17H1712L1716 25H1700Z"/>
<text class="hd" x="1722" y="22" textLength="44" lengthAdjust="spacingAndGlyphs">Studies</text>
<path class="ic" d="M1788 8H1804M1789 17L1793 11L1795 16L1798 11L1800 15L1803 12"/><path d="M1787 25L1805 18" stroke="#d5e0e6" stroke-width="2" fill="none"/>
<text class="hd" x="1811" y="22" textLength="49" lengthAdjust="spacingAndGlyphs">Patterns</text>
<!-- row 2 -->
<rect y="30" width="1820" height="23" fill="#0d0d0d"/>
<path class="s" shape-rendering="crispEdges" d="M0 30.500H1821M0 52.500H1821M129.500 31V52M205.500 31V52M268.500 31V52M331.500 31V52M391.500 31V52M452.500 31V52M499.500 31V52M726.500 31V52M773.500 31V52M1007.500 31V52M1054.500 31V52M1674.500 31V52M1815.500 31V52"/>
<text x="2" y="46" font-size="14" font-weight="bold" fill="#f0f0f0" textLength="122" lengthAdjust="spacingAndGlyphs">KMB 10 Y 1D [NYSE]</text>
<text class="r2" x="133" y="46" textLength="66" lengthAdjust="spacingAndGlyphs">D: 11/10/21</text>
<text class="r2" x="209" y="46" textLength="53" lengthAdjust="spacingAndGlyphs">O: 133.23</text>
<text class="r2" x="273" y="46" textLength="53" lengthAdjust="spacingAndGlyphs">H: 135.17</text>
<text class="r2" x="335" y="46" textLength="51" lengthAdjust="spacingAndGlyphs">L: 132.66</text>
<text class="r2" x="395" y="46" textLength="51" lengthAdjust="spacingAndGlyphs">C: 134.71</text>
<text class="r2" x="456" y="46" textLength="37" lengthAdjust="spacingAndGlyphs">R: 2.51</text>
<text x="504" y="46" font-size="14" fill="#f3dca0" textLength="217" lengthAdjust="spacingAndGlyphs">MovAvgExponential (CLOSE, 8, 0, no)</text>
<text x="730.500" y="46" font-size="14" fill="#f3dca0" textLength="37" lengthAdjust="spacingAndGlyphs">132.47</text>
<text x="777.500" y="46" font-size="14" fill="#00e0f0" textLength="224.500" lengthAdjust="spacingAndGlyphs">MovAvgExponential (CLOSE, 21, 0, no)</text>
<text x="1011" y="46" font-size="14" fill="#00e0f0" textLength="37" lengthAdjust="spacingAndGlyphs">132.16</text>
<text x="1059" y="46" font-size="14" fill="#0b5a0b" textLength="609" lengthAdjust="spacingAndGlyphs">DisplacedVolumeProfile (Volume, Ticksize, 1.0, Year, 1, no, yes, 2, yes, yes, yes, 70, no, 20, no, no, yes, no)</text>
<text x="1678" y="46" font-size="14" fill="#f3dca0" textLength="132" lengthAdjust="spacingAndGlyphs">MovAvgExponential ...</text>
<!-- month pills -->
<g shape-rendering="crispEdges">
<rect x="2" y="56" width="108" height="21" fill="#ffff00"/><rect x="112" y="56" width="110" height="21" fill="#00ff00"/><rect x="224" y="56" width="113.500" height="21" fill="#00ff00"/><rect x="339" y="56" width="103.500" height="21" fill="#00ff00"/><rect x="444" y="56" width="118.500" height="21" fill="#ffff00"/><rect x="564" y="56" width="108.500" height="21" fill="#00ff00"/><rect x="674.500" y="56" width="97.500" height="21" fill="#00ff00"/><rect x="774" y="56" width="116" height="21" fill="#ffff00"/><rect x="892" y="56" width="114" height="21" fill="#ffff00"/><rect x="1008" y="56" width="113.500" height="21" fill="#ffff00"/><rect x="1123.500" y="56" width="113" height="21" fill="#00ff00"/><rect x="1239" y="56" width="112" height="21" fill="#ffff00"/>
</g>
<text class="mo" x="4" y="71" textLength="104" lengthAdjust="spacingAndGlyphs">Jan: 50% | 0.64%</text>
<text class="mo" x="114.500" y="71" textLength="105.500" lengthAdjust="spacingAndGlyphs">Feb: 70% | 0.97%</text>
<text class="mo" x="226.500" y="71" textLength="109" lengthAdjust="spacingAndGlyphs">Mar: 60% | 1.53%</text>
<text class="mo" x="341" y="71" textLength="100" lengthAdjust="spacingAndGlyphs">Apr: 60% | 1.5%</text>
<text class="mo" x="446.500" y="71" textLength="114" lengthAdjust="spacingAndGlyphs">May: 50% | -0.42%</text>
<text class="mo" x="566" y="71" textLength="104.500" lengthAdjust="spacingAndGlyphs">Jun: 60% | 1.92%</text>
<text class="mo" x="676.500" y="71" textLength="93.500" lengthAdjust="spacingAndGlyphs">Jul: 70% | 1.6%</text>
<text class="mo" x="776" y="71" textLength="112" lengthAdjust="spacingAndGlyphs">Aug: 60% | -0.18%</text>
<text class="mo" x="894" y="71" textLength="110" lengthAdjust="spacingAndGlyphs">Sep: 40% | -1.09%</text>
<text class="mo" x="1010" y="71" textLength="109.500" lengthAdjust="spacingAndGlyphs">Oct: 30% | -1.06%</text>
<text class="mo" x="1126" y="71" textLength="108.500" lengthAdjust="spacingAndGlyphs">Nov: 90% | 3.86%</text>
<text class="mo" x="1242" y="71" textLength="107" lengthAdjust="spacingAndGlyphs">Dec: 40% | 0.02%</text>
</svg>
</body></html>
